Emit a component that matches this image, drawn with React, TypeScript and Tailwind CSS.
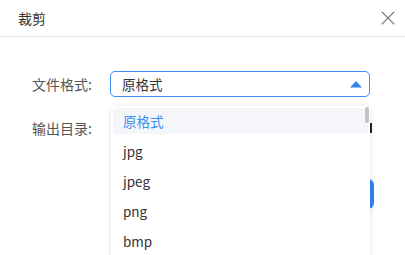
import { X } from 'lucide-react'

// Dialog « 裁剪 » with the file-format select opened

const formats = ['原格式', 'jpg', 'jpeg', 'png', 'bmp']

export default function App() {
  return (
    <div
      className="relative w-[405px] h-[255px] overflow-hidden bg-white text-[#333]"
      style={{ fontFamily: '"Noto Sans CJK SC", "Noto Sans", sans-serif' }}
    >
      {/* Header */}
      <header className="h-[37px] border-b border-[#e8e8e8] flex items-center justify-between pl-[18px] pr-[5px]">
        <h2 className="text-[14px] leading-none text-[#303133]">裁剪</h2>
        <X className="w-6 h-6 text-[#7a7a7a]" strokeWidth={1.1} />
      </header>

      {/* Form */}
      <div className="pt-[34px] flex flex-col gap-[18px]">
        <div className="flex items-center h-[26px]">
          <label className="w-[94px] pr-[2px] text-right text-[14px] text-[#555]">文件格式:</label>
          <div className="ml-[16px] w-[260px] h-[26px] border border-[#3a8ef6] rounded-[5px] flex items-center justify-between pl-[11px] pr-[6px]">
            <span className="text-[13.5px] text-[#333]">原格式</span>
            <svg width="14" height="8" viewBox="0 0 14 8">
              <path d="M1 7.5 L7 1 L13 7.5 Z" fill="#2f86f6" />
            </svg>
          </div>
        </div>
        <div className="flex items-center h-[26px]">
          <label className="w-[94px] pr-[2px] text-right text-[14px] text-[#555]">输出目录:</label>
          <div className="ml-[16px] w-[262px] h-[26px] flex items-center justify-end">
            <span className="w-[3px] h-[10px] bg-[#222]" />
          </div>
        </div>
        <div className="flex justify-end pr-[31px] pt-[20px]">
          <button className="w-[70px] h-[30px] rounded-[6px] bg-[#2f86f6] text-white text-[13px]">确定</button>
        </div>
      </div>

      {/* Opened dropdown */}
      <div className="absolute left-[111px] top-[106px] w-[259px] h-[160px] bg-white rounded-[5px] shadow-[0_1px_6px_rgba(0,0,0,0.12)] pt-[2px] px-[2px]">
        <ul className="flex flex-col">
          {formats.map((f, i) => (
            <li
              key={f}
              className={
                'flex items-center pl-[10px] text-[13.5px] rounded-[4px] ' +
                (i === 0 ? 'bg-[#f4f6fa] text-[#3a8ef6] h-[26px] mb-[2px]' : 'h-[30px] text-[#333]')
              }
            >
              {f}
            </li>
          ))}
        </ul>
        <div className="absolute right-[1px] top-[1px] w-[4px] h-[16px] rounded-[2px] bg-[#bfc3c9]" />
      </div>
    </div>
  )
}
